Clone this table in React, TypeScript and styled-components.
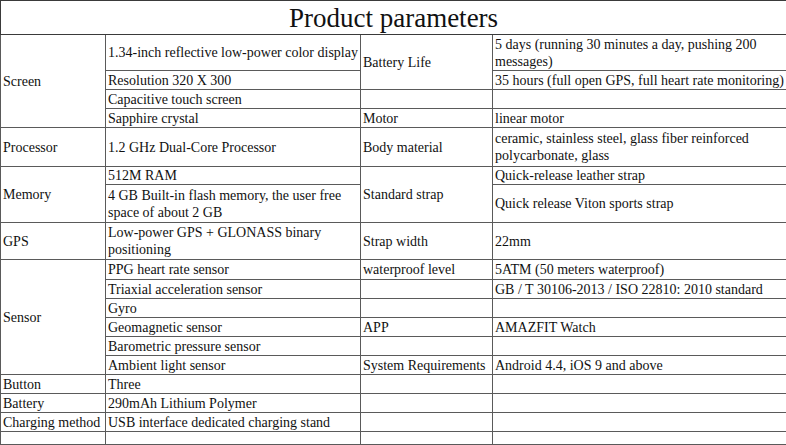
import React from "react";
import styled, { createGlobalStyle } from "styled-components";

const Global = createGlobalStyle`
  html, body { margin: 0; padding: 0; background: #fff; }
  #root { width: 786px; height: 445px; overflow: hidden; }
`;

const Table = styled.table`
  width: 786px;
  table-layout: fixed;
  border-collapse: collapse;
  font-family: "Liberation Serif", "Times New Roman", serif;
  font-size: 14px;
  line-height: 17px;
  color: #111;
  border: 1px solid #3a3a3a;
`;

const Row = styled.tr<{ $h: number }>`
  height: ${(p) => p.$h}px;
`;

const Cell = styled.td`
  border: 1px solid #5a5a5a;
  padding: 0 0 0 2px;
  vertical-align: middle;
  text-align: left;
  white-space: normal;
  overflow: hidden;
`;

const TitleCell = styled.td`
  border: 1px solid #3a3a3a;
  padding: 0;
  text-align: center;
  vertical-align: middle;
  font-size: 27px;
  line-height: 30px;
  color: #111;
`;

type R = { h: number; cells: React.ReactNode };

export default function App() {
  const rows: R[] = [
    {
      h: 36,
      cells: (
        <>
          <Cell rowSpan={4}>Screen</Cell>
          <Cell>1.34-inch reflective low-power color display</Cell>
          <Cell rowSpan={2}>Battery Life</Cell>
          <Cell>5 days (running 30 minutes a day, pushing 200 messages)</Cell>
        </>
      ),
    },
    {
      h: 19,
      cells: (
        <>
          <Cell>Resolution 320 X 300</Cell>
          <Cell>35 hours (full open GPS, full heart rate monitoring)</Cell>
        </>
      ),
    },
    {
      h: 19,
      cells: (
        <>
          <Cell>Capacitive touch screen</Cell>
          <Cell />
          <Cell />
        </>
      ),
    },
    {
      h: 19,
      cells: (
        <>
          <Cell>Sapphire crystal</Cell>
          <Cell>Motor</Cell>
          <Cell>linear motor</Cell>
        </>
      ),
    },
    {
      h: 39,
      cells: (
        <>
          <Cell>Processor</Cell>
          <Cell>1.2 GHz Dual-Core Processor</Cell>
          <Cell>Body material</Cell>
          <Cell>ceramic, stainless steel, glass fiber reinforced polycarbonate, glass</Cell>
        </>
      ),
    },
    {
      h: 18,
      cells: (
        <>
          <Cell rowSpan={2}>Memory</Cell>
          <Cell>512M RAM</Cell>
          <Cell rowSpan={2}>Standard strap</Cell>
          <Cell>Quick-release leather strap</Cell>
        </>
      ),
    },
    {
      h: 38,
      cells: (
        <>
          <Cell>4 GB Built-in flash memory, the user free space of about 2 GB</Cell>
          <Cell>Quick release Viton sports strap</Cell>
        </>
      ),
    },
    {
      h: 37,
      cells: (
        <>
          <Cell>GPS</Cell>
          <Cell>Low-power GPS + GLONASS binary positioning</Cell>
          <Cell>Strap width</Cell>
          <Cell>22mm</Cell>
        </>
      ),
    },
    {
      h: 20,
      cells: (
        <>
          <Cell rowSpan={6}>Sensor</Cell>
          <Cell>PPG heart rate sensor</Cell>
          <Cell>waterproof level</Cell>
          <Cell>5ATM (50 meters waterproof)</Cell>
        </>
      ),
    },
    {
      h: 19,
      cells: (
        <>
          <Cell>Triaxial acceleration sensor</Cell>
          <Cell />
          <Cell>GB / T 30106-2013 / ISO 22810: 2010 standard</Cell>
        </>
      ),
    },
    {
      h: 19,
      cells: (
        <>
          <Cell>Gyro</Cell>
          <Cell />
          <Cell />
        </>
      ),
    },
    {
      h: 19,
      cells: (
        <>
          <Cell>Geomagnetic sensor</Cell>
          <Cell>APP</Cell>
          <Cell>AMAZFIT Watch</Cell>
        </>
      ),
    },
    {
      h: 19,
      cells: (
        <>
          <Cell>Barometric pressure sensor</Cell>
          <Cell />
          <Cell />
        </>
      ),
    },
    {
      h: 19,
      cells: (
        <>
          <Cell>Ambient light sensor</Cell>
          <Cell>System Requirements</Cell>
          <Cell>Android 4.4, iOS 9 and above</Cell>
        </>
      ),
    },
    {
      h: 19,
      cells: (
        <>
          <Cell>Button</Cell>
          <Cell>Three</Cell>
          <Cell />
          <Cell />
        </>
      ),
    },
    {
      h: 19,
      cells: (
        <>
          <Cell>Battery</Cell>
          <Cell>290mAh Lithium Polymer</Cell>
          <Cell />
          <Cell />
        </>
      ),
    },
    {
      h: 19,
      cells: (
        <>
          <Cell>Charging method</Cell>
          <Cell>USB interface dedicated charging stand</Cell>
          <Cell />
          <Cell />
        </>
      ),
    },
    {
      h: 13,
      cells: (
        <>
          <Cell />
          <Cell />
          <Cell />
          <Cell />
        </>
      ),
    },
  ];

  return (
    <>
      <Global />
      <Table>
        <colgroup>
          <col style={{ width: 105 }} />
          <col style={{ width: 255 }} />
          <col style={{ width: 132 }} />
          <col style={{ width: 294 }} />
        </colgroup>
        <tbody>
          <Row $h={34}>
            <TitleCell colSpan={4}>Product parameters</TitleCell>
          </Row>
          {rows.map((r, i) => (
            <Row key={i} $h={r.h}>
              {r.cells}
            </Row>
          ))}
        </tbody>
      </Table>
    </>
  );
}
